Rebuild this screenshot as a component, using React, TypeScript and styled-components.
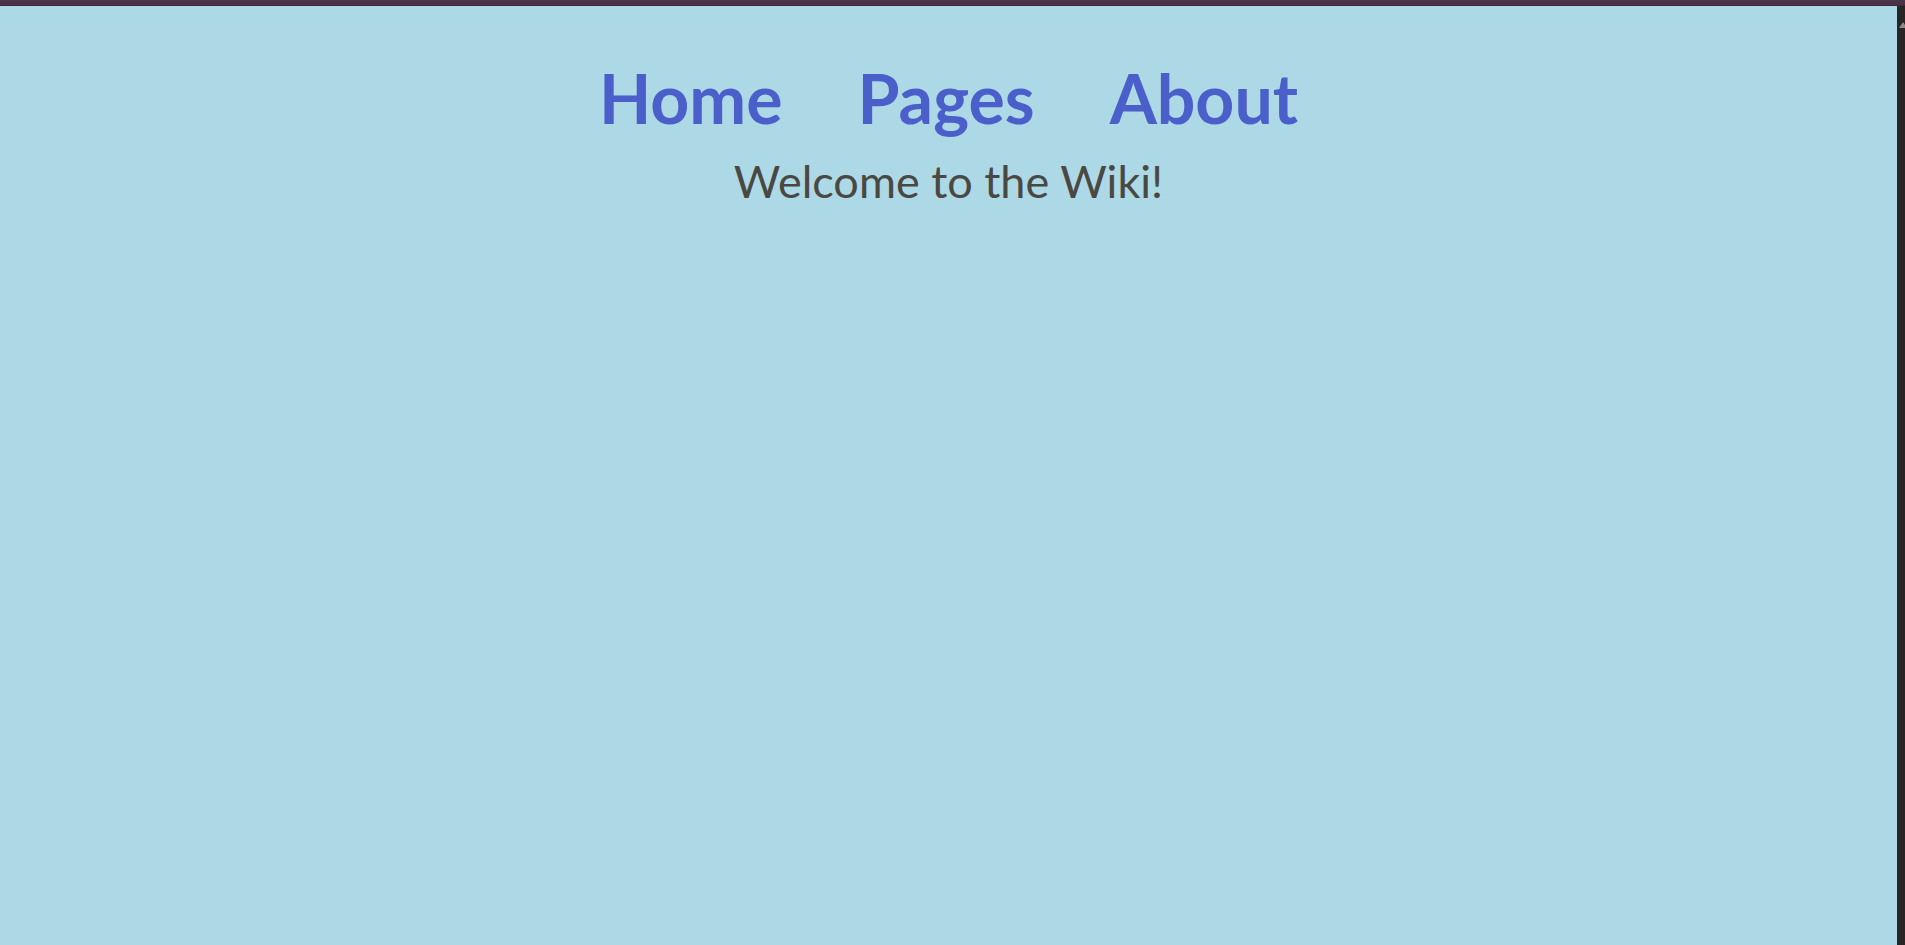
import React from "react";
import styled, { createGlobalStyle } from "styled-components";

const Global = createGlobalStyle`
  html, body { margin: 0; padding: 0; height: 100%; }
  body { background: #add8e6; overflow: hidden; }
  #root { height: 100%; }
`;

const Frame = styled.div`
  display: flex;
  flex-direction: column;
  height: 945px;
  width: 1905px;
`;

const TopBar = styled.div`
  height: 5px;
  background: #4b3349;
  border-bottom: 1px solid #3f2a3d;
  flex: none;
`;

const Body = styled.div`
  flex: 1;
  display: flex;
`;

const Content = styled.main`
  flex: 1;
  display: flex;
  flex-direction: column;
  align-items: center;
  padding-top: 58px;
  background: #add8e6;
`;

const Nav = styled.nav`
  display: flex;
  gap: 75px;
`;

const NavLink = styled.a`
  font-family: Lato, "Noto Sans", sans-serif;
  font-weight: 700;
  font-size: 68px;
  line-height: 1;
  color: #4a5fca;
  text-decoration: none;
  cursor: pointer;
`;

const Welcome = styled.h1`
  margin: 27px 0 0;
  font-family: Lato, "Noto Sans", sans-serif;
  font-weight: 400;
  font-size: 45px;
  line-height: 1;
  color: #4a4842;
`;

const ScrollTrack = styled.div`
  width: 8px;
  flex: none;
  background: #262626;
  position: relative;
`;

const ScrollArrow = styled.div`
  position: absolute;
  top: 16px;
  left: 2px;
  width: 0;
  height: 0;
  border-left: 4px solid transparent;
  border-right: 4px solid transparent;
  border-bottom: 6px solid #8a8a8a;
`;

export default function App() {
  return (
    <>
      <Global />
      <Frame>
        <TopBar />
        <Body>
          <Content>
            <Nav>
              <NavLink>Home</NavLink>
              <NavLink>Pages</NavLink>
              <NavLink>About</NavLink>
            </Nav>
            <Welcome>Welcome to the Wiki!</Welcome>
          </Content>
          <ScrollTrack>
            <ScrollArrow />
          </ScrollTrack>
        </Body>
      </Frame>
    </>
  );
}
